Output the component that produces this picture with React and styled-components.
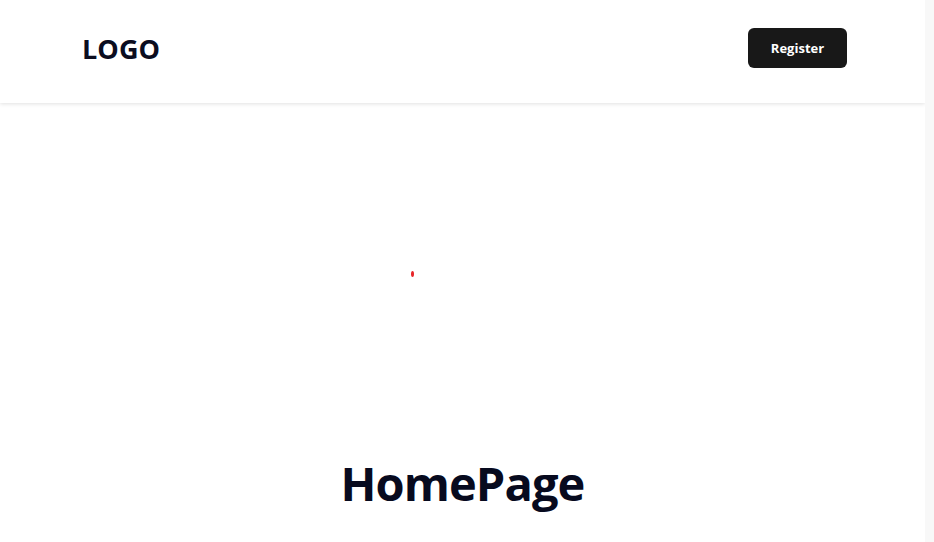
import React from "react";
import styled, { createGlobalStyle } from "styled-components";

const GlobalStyle = createGlobalStyle`
  body {
    margin: 0;
    background: #ffffff;
    font-family: "Open Sans", "Noto Sans", "Liberation Sans", sans-serif;
    color: #0b0d1f;
  }
`;

const Page = styled.div`
  min-height: 542px;
  border-right: 9px solid #fafafa;
  border-image: linear-gradient(to right, #ffffff, #f8f8f8) 1;
  overflow: hidden;
`;

const Header = styled.header`
  height: 103px;
  background: #fff;
  box-shadow: 0 1px 4px rgba(0, 0, 0, 0.12);
  display: flex;
  align-items: center;
  justify-content: space-between;
  padding: 0 78px 0 82px;
  position: relative;
  z-index: 1;
`;

const Logo = styled.h1`
  margin: 0 0 6px;
  font-size: 27px;
  font-weight: 700;
  letter-spacing: 0.1px;
  color: #0b0d1f;
`;

const Button = styled.button`
  width: 99px;
  height: 40px;
  margin-bottom: 7px;
  border: none;
  border-radius: 6px;
  background: #181818;
  color: #fff;
  font-family: inherit;
  font-size: 13px;
  font-weight: 700;
  cursor: pointer;
`;

const Main = styled.main`
  display: flex;
  flex-direction: column;
  align-items: center;
`;

const Hero = styled.section`
  height: 348px;
  width: 100%;
  position: relative;
`;

const Dot = styled.span`
  position: absolute;
  left: 411px;
  top: 168px;
  width: 3px;
  height: 6px;
  border-radius: 50%;
  background: #e8262a;
`;

const Title = styled.h2`
  margin: 0;
  font-size: 47px;
  font-weight: 700;
  letter-spacing: -0.9px;
  color: #070a1e;
`;

export default function App() {
  return (
    <Page>
      <GlobalStyle />
      <Header>
        <Logo>LOGO</Logo>
        <Button>Register</Button>
      </Header>
      <Main>
        <Hero>
          <Dot />
        </Hero>
        <Title>HomePage</Title>
      </Main>
    </Page>
  );
}
